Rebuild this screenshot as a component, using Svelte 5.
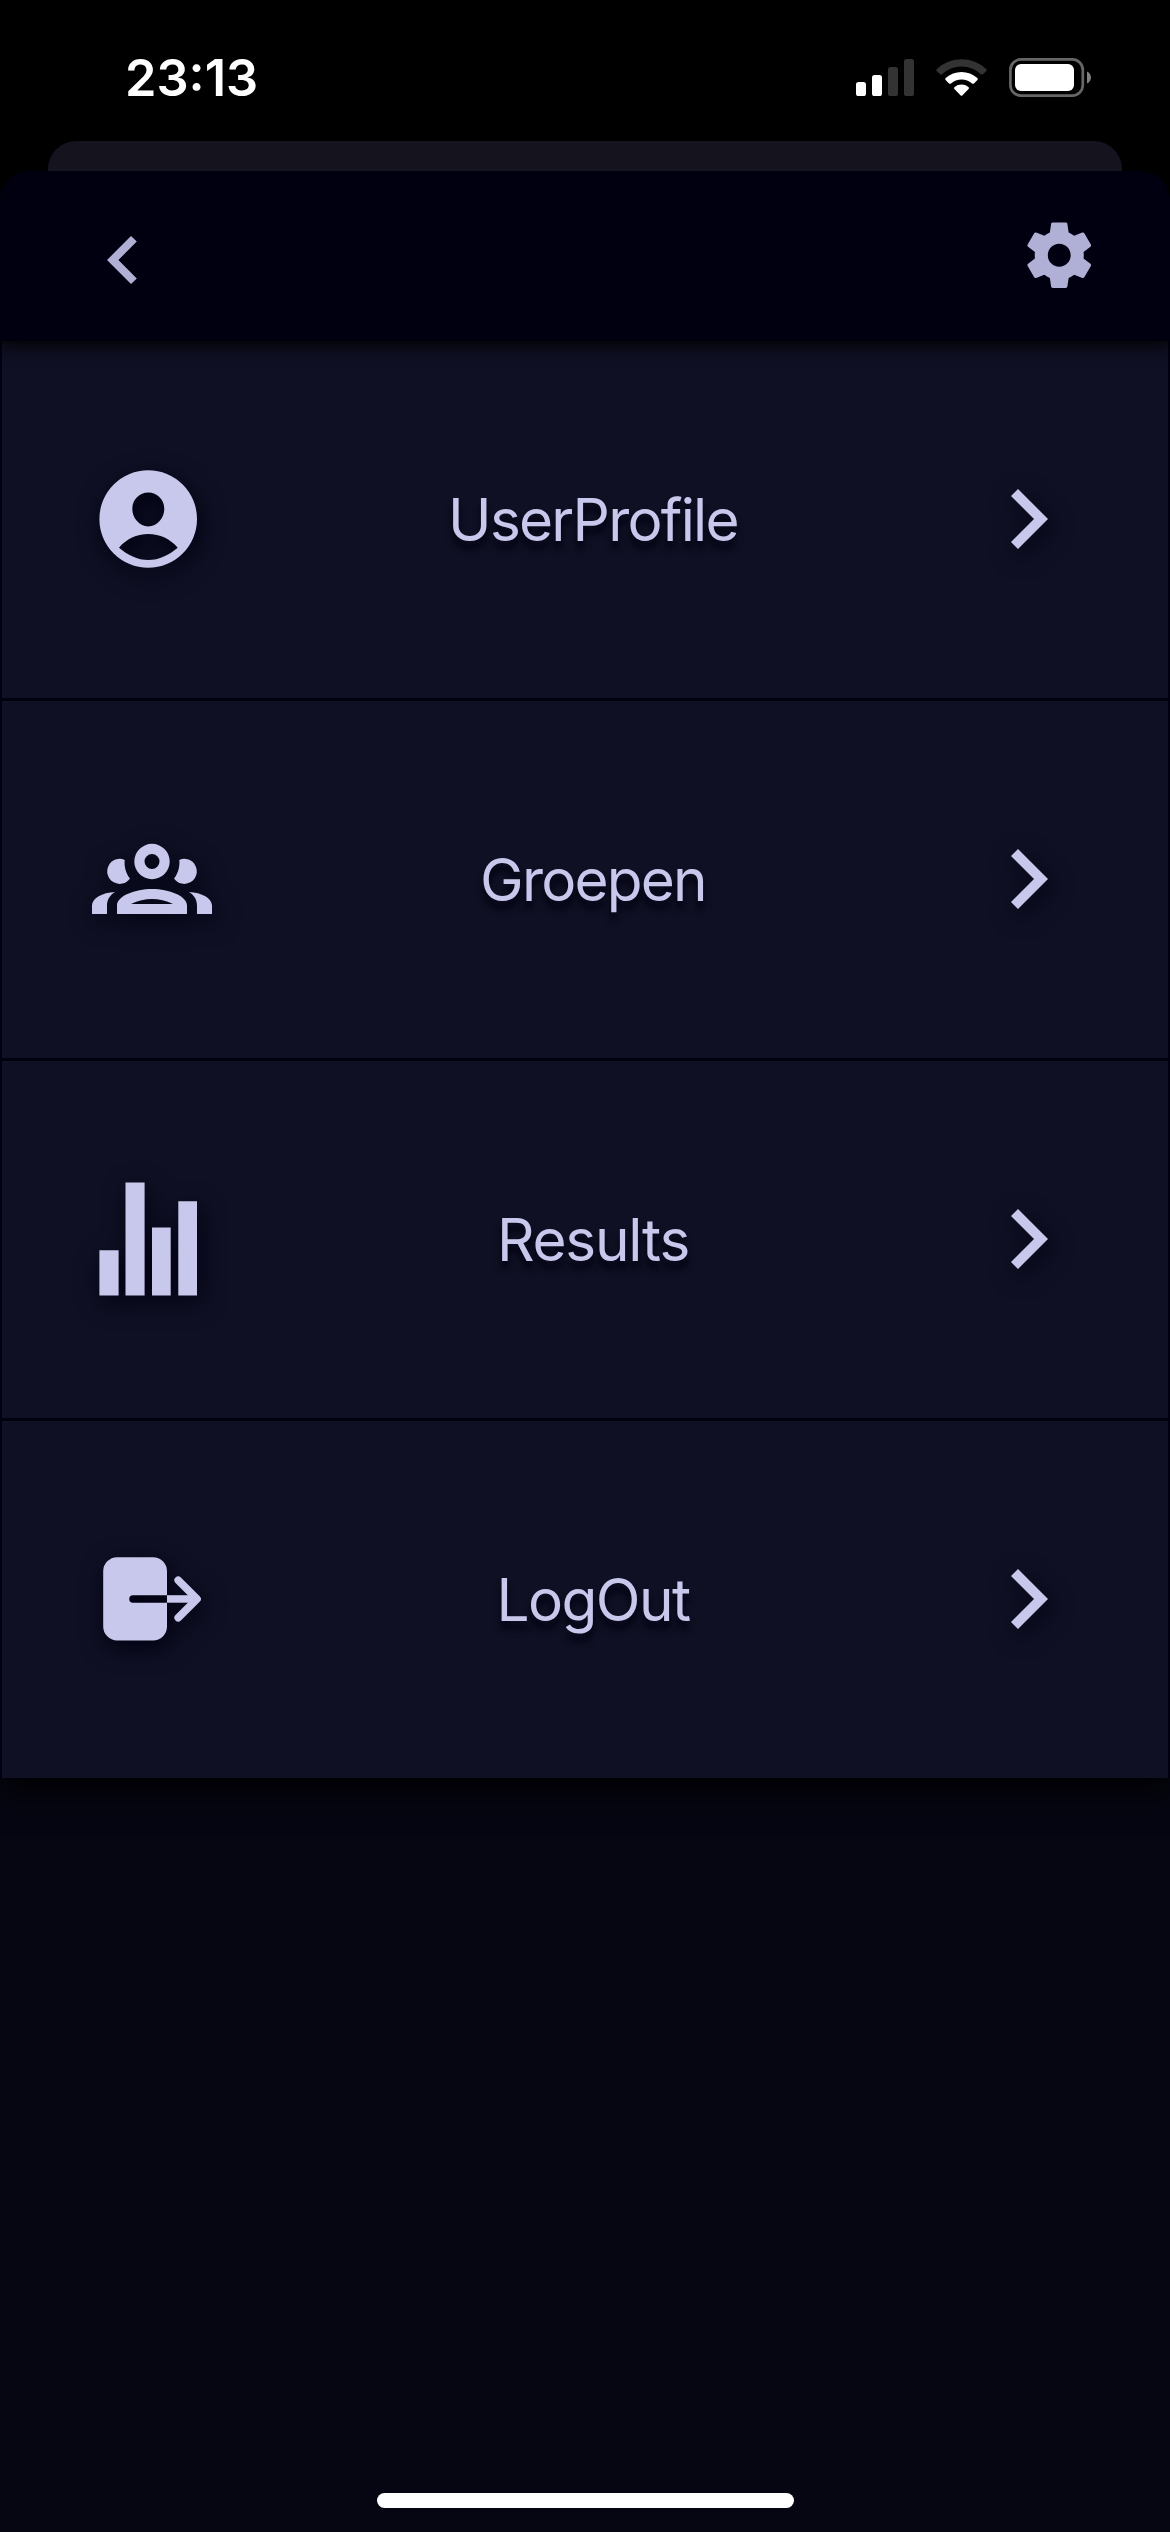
<script>
  const items = [
    { label: 'UserProfile', icon: 'profile', tracking: '-1.750px' },
    { label: 'Groepen', icon: 'groups', tracking: '-1.800px' },
    { label: 'Results', icon: 'results', tracking: '-1.250px' },
    { label: 'LogOut', icon: 'logout', tracking: '-1.550px' },
  ];
</script>

<div class="screen">
  <div class="status">
    <span class="time">23:13</span>
    <svg class="indicators" width="236" height="40" viewBox="56 58 236 40">
      <g fill="#fff">
        <rect x="56" y="82" width="10" height="14" rx="2.6" />
        <rect x="72" y="75" width="10" height="21" rx="2.6" />
      </g>
      <g fill="#333">
        <rect x="88" y="67" width="10" height="29" rx="2.6" />
        <rect x="104" y="59" width="10" height="37" rx="2.6" />
      </g>
      <path fill="#333" d="M136.800 71.200Q135.700 70 136.900 68.900A36.500 36.500 0 0 1 186.100 68.900Q187.300 70 186.200 71.200L182.900 74.300Q181.900 75 180.900 74.200A28.600 28.600 0 0 0 142.100 74.200Q141.100 75 140.100 74.300Z" />
      <path fill="#fff" d="M145.600 80.100Q144.600 79 145.700 78A23.700 23.700 0 0 1 177.300 78Q178.400 79 177.400 80.100L174 83.400Q173 84.200 172 83.400A16 16 0 0 0 151 83.400Q150 84.200 149 83.400Z" />
      <path fill="#fff" d="M154.400 88.900Q153.400 87.800 154.600 86.900A11.500 11.500 0 0 1 168.400 86.900Q169.600 87.800 168.600 88.900L162.300 95.500Q161.500 96.200 160.700 95.500Z" />
      <rect x="210.400" y="59.400" width="72.400" height="36.200" rx="10.500" fill="none" stroke="#666" stroke-width="2.700" />
      <rect x="215" y="64" width="59" height="27" rx="6" fill="#fff" />
      <path d="M287 71.500C289.500 72.500 291 75 291 77.500S289.500 82.500 287 83.500Z" fill="#808080" />
    </svg>
  </div>

  <div class="card-behind"></div>

  <main class="sheet">
    <header>
      <svg class="back" width="30" height="48" viewBox="107 236 30 48">
        <path d="M131 236L136.800 241.600L118.400 260L136.800 278.400L131 284L107 260Z" />
      </svg>
      <svg class="gear" width="78.500" height="78.500" viewBox="0 0 24 24">
        <path d="M19.430 12.980c.04-.32.07-.64.07-.98s-.03-.66-.07-.98l2.110-1.650c.19-.15.24-.42.12-.64l-2-3.460c-.12-.22-.39-.3-.61-.22l-2.490 1c-.52-.4-1.080-.73-1.690-.98l-.38-2.650C14.460 2.180 14.250 2 14 2h-4c-.25 0-.46.18-.49.42l-.38 2.650c-.61.25-1.170.59-1.690.98l-2.490-1c-.23-.09-.49 0-.61.22l-2 3.460c-.13.22-.07.49.12.64l2.110 1.650c-.04.32-.07.65-.07.98s.03.66.07.98l-2.110 1.650c-.19.15-.24.42-.12.64l2 3.460c.12.22.39.3.61.22l2.490-1c.52.4 1.080.73 1.690.98l.38 2.650c.03.24.24.42.49.42h4c.25 0 .46-.18.49-.42l.38-2.650c.61-.25 1.170-.59 1.690-.98l2.490 1c.23.09.49 0 .61-.22l2-3.460c.12-.22.07-.49-.12-.64l-2.110-1.650zM12 15.500c-1.930 0-3.500-1.570-3.500-3.500s1.570-3.500 3.500-3.500 3.500 1.570 3.500 3.500-1.570 3.500-3.500 3.500z" />
      </svg>
    </header>

    <nav>
      {#each items as item}
        <div class="row">
          <svg class="icon" width="200" height="159" viewBox="0 0 200 159">
            {#if item.icon === 'profile'}
              <path fill-rule="evenodd" d="M39.400 79A48.800 48.800 0 1 1 137 79A48.800 48.800 0 1 1 39.400 79ZM88.300 52.500C79.500 52.500 72.300 59.500 72.300 68.700C72.300 78 79.500 86.400 88.300 86.400S104.300 78 104.300 68.700C104.300 59.500 97.100 52.500 88.300 52.500ZM59 107.700C67.500 114.800 77.500 120 88.300 120S109.200 114.800 117.700 107.700C110.500 99 99.700 94 88.300 94S66.200 99 59 107.700Z" />
            {:else if item.icon === 'groups'}
              <path fill-rule="evenodd" d="M74.300 61.500A17.700 17.700 0 1 1 109.700 61.500A17.700 17.700 0 1 1 74.300 61.500ZM92 54A7.500 7.500 0 1 0 92 69A7.500 7.500 0 1 0 92 54ZM57 114V105.500C57 96 75 89 92 89S127 96 127 105.500V114ZM71 104H113C106 100.500 99 98.900 92 98.900S78 100.500 71 104Z" />
              <path d="M64.700 59.900A12.500 12.500 0 1 0 70 78.500C66 73.500 64 66.500 64.700 59.900ZM119.300 59.900A12.500 12.500 0 1 1 114 78.500C118 73.500 120 66.500 119.300 59.900Z" />
              <path d="M32 114V105.500C32 98.500 42 92.500 55 92C49.500 95.500 47 100 47 106V114ZM152 114V105.500C152 98.500 142 92.500 129 92C134.500 95.500 137 100 137 106V114Z" />
            {:else if item.icon === 'results'}
              <path d="M39.400 90.200H58.600V135.400H39.400ZM65.500 22.500H84.600V135.400H65.500ZM92 67.500H110.700V135.400H92ZM118.300 41.300H137V135.400H118.300Z" />
            {:else}
              <path d="M57 37.200H93A14 14 0 0 1 107 51.200V75.200H73A3.750 3.750 0 0 0 73 82.700H107V106.500A14 14 0 0 1 93 120.500H57A14 14 0 0 1 43.200 106.500V51.200A14 14 0 0 1 57 37.200Z" />
              <path class="stroke" d="M118.200 60.200L137 79L118.200 97.800" />
              <path d="M107 75.200H137V82.700H107Z" />
            {/if}
          </svg>
          <span class="label" style:letter-spacing={item.tracking}>{item.label}</span>
          <svg class="icon" width="200" height="159" viewBox="0 0 200 159">
            <path d="M48 49L78 79L48 109L41 102L64 79L41 56Z" />
          </svg>
        </div>
      {/each}
    </nav>

    <div class="home"></div>
  </main>
</div>

<style>
  :global(body) {
    background: #000;
  }
  .screen {
    width: 1170px;
    height: 2532px;
    display: flex;
    flex-direction: column;
    background: #000;
    font-family: Inter, 'Liberation Sans', sans-serif;
    overflow: hidden;
  }
  .status {
    height: 141px;
    flex: none;
    box-sizing: border-box;
    padding: 58px 78px 0 125px;
    display: flex;
    justify-content: space-between;
    align-items: flex-start;
  }
  .time {
    color: #fff;
    font-size: 50.500px;
    line-height: 40px;
    font-weight: 600;
    letter-spacing: 0;
  }
  .card-behind {
    height: 30px;
    flex: none;
    margin: 0 48px;
    border-radius: 28px 28px 0 0;
    background: #14131e;
  }
  .sheet {
    flex: 1;
    display: flex;
    flex-direction: column;
    border-radius: 30px 30px 0 0;
    background: #060612;
    overflow: hidden;
  }
  header {
    height: 169px;
    flex: none;
    box-sizing: border-box;
    padding: 0 72px 0 107px;
    display: flex;
    align-items: center;
    justify-content: space-between;
    background: #000011;
    fill: #b0afd5;
    position: relative;
    z-index: 1;
    box-shadow: 0 5px 16px #000;
  }
  .back {
    margin-top: 9px;
  }
  nav {
    display: flex;
    flex-direction: column;
    gap: 3px;
    flex: none;
    border: solid #000011;
    border-width: 1px 2px 0;
    background: #000011;
    box-shadow: 0 12px 30px #000;
  }
  .row {
    height: 357px;
    box-sizing: border-box;
    padding: 0 0 0 58px;
    display: grid;
    grid-template-columns: 200px 1fr 198px;
    align-items: center;
    background: #0f1023;
  }
  .icon {
    fill: #c8c7ec;
    filter: drop-shadow(3px 7px 12px #000011);
    overflow: visible;
  }
  .stroke {
    fill: none;
    stroke: #c8c7ec;
    stroke-width: 7.600px;
    stroke-linecap: round;
    stroke-linejoin: round;
  }
  .label {
    color: #c8c7ec;
    font-size: 58.500px;
    line-height: 72px;
    text-align: center;
    padding-right: 44px;
    text-shadow: 0 8px 7px #000011;
  }
  .home {
    width: 417px;
    height: 15px;
    border-radius: 8px;
    background: #fff;
    margin: auto auto 24px 377px;
  }
</style>
